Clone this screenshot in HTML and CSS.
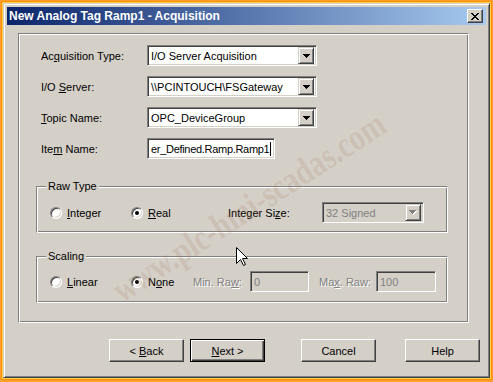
FILE: index.html
```html
<!DOCTYPE html>
<html lang="en">
<head>
  <meta charset="UTF-8">
  <title>New Analog Tag Ramp1 - Acquisition</title>
  <link rel="stylesheet" href="styles.css">
</head>
<body>

  <div class="window">
    <div class="titlebar">
      <span class="title">New Analog Tag Ramp1 - Acquisition</span>
      <div class="close-btn">
        <svg width="8" height="7" viewBox="0 0 8 7"><path d="M0 0h2v1H0zM6 0h2v1H6zM1 1h2v1H1zM5 1h2v1H5zM2 2h4v1H2zM3 3h2v1H3zM2 4h4v1H2zM1 5h2v1H1zM5 5h2v1H5zM0 6h2v1H0zM6 6h2v1H6z" fill="#000"/></svg>
      </div>
    </div>

    <div class="panel">
      <div class="form-grid">
        <span class="label">Ac<u>q</u>uisition Type:</span>
        <div class="combo wide">
          <span class="field-text">I/O Server Acquisition</span>
          <span class="combo-arrow"><svg width="7" height="4" viewBox="0 0 7 4"><path d="M0 0h7v1H0zM1 1h5v1H1zM2 2h3v1H2zM3 3h1v1H3z" fill="#000"/></svg></span>
        </div>

        <span class="label">I/O <u>S</u>erver:</span>
        <div class="combo wide">
          <span class="field-text">\\PCINTOUCH\FSGateway</span>
          <span class="combo-arrow"><svg width="7" height="4" viewBox="0 0 7 4"><path d="M0 0h7v1H0zM1 1h5v1H1zM2 2h3v1H2zM3 3h1v1H3z" fill="#000"/></svg></span>
        </div>

        <span class="label"><u>T</u>opic Name:</span>
        <div class="combo wide">
          <span class="field-text">OPC_DeviceGroup</span>
          <span class="combo-arrow"><svg width="7" height="4" viewBox="0 0 7 4"><path d="M0 0h7v1H0zM1 1h5v1H1zM2 2h3v1H2zM3 3h1v1H3z" fill="#000"/></svg></span>
        </div>

        <span class="label">Ite<u>m</u> Name:</span>
        <div class="textbox item-box">
          <span class="field-text">er_Defined.Ramp.Ramp1</span><span class="caret"></span>
        </div>
      </div>

      <div class="group raw-group">
        <span class="group-title">Raw Type</span>
        <div class="group-row">
          <div class="option opt-first"><span class="radio"></span><span><u>I</u>nteger</span></div>
          <div class="option opt-real"><span class="radio checked"></span><span><u>R</u>eal</span></div>
          <span class="label size-label">Integer Si<u>z</u>e:</span>
          <div class="combo disabled size-combo">
            <span class="field-text">32 Signed</span>
            <span class="combo-arrow"><svg width="8" height="5" viewBox="0 0 8 5"><path d="M1 1h7v1H1zM2 2h5v1H2zM3 3h3v1H3zM4 4h1v1H4z" fill="#fff"/><path d="M0 0h7v1H0zM1 1h5v1H1zM2 2h3v1H2zM3 3h1v1H3z" fill="#808080"/></svg></span>
          </div>
        </div>
      </div>

      <div class="group scale-group">
        <span class="group-title">Scaling</span>
        <div class="group-row">
          <div class="option opt-first"><span class="radio"></span><span><u>L</u>inear</span></div>
          <div class="option opt-none"><span class="radio checked"></span><span>N<u>o</u>ne</span></div>
          <span class="label muted raw-label">Min. Ra<u>w</u>:</span>
          <div class="textbox disabled min-box"><span class="field-text">0</span></div>
          <span class="label muted raw-label max-label">Ma<u>x</u>. Raw:</span>
          <div class="textbox disabled max-box"><span class="field-text">100</span></div>
        </div>
      </div>
    </div>

    <div class="buttons">
      <button class="btn">&lt; <u>B</u>ack</button>
      <button class="btn default"><u>N</u>ext &gt;</button>
      <button class="btn cancel">Cancel</button>
      <button class="btn help">Help</button>
    </div>

    <div class="watermark">www.plc-hmi-scadas.com</div>
    <svg class="cursor" width="12" height="19" viewBox="0 0 12 19"><path d="M0.5 0.5V16.5L4.5 12.5L7.5 18.5L9.5 17.5L6.5 11.5H11.5Z" fill="#fff" stroke="#000" stroke-width="1"/></svg>
  </div>

</body>
</html>
```

FILE: styles.css
```css
body {
  margin: 0;
  padding: 3px;
  background-color: #ff9d2e;
  font-family: "Liberation Sans", Arial, sans-serif;
  font-size: 11px;
  color: #000;
}

.window {
  position: relative;
  width: 487px;
  height: 375px;
  box-sizing: border-box;
  padding: 3px;
  background-color: #d4d0c8;
  border: 1px solid;
  border-color: #d4d0c8 #404040 #404040 #d4d0c8;
  box-shadow: inset 1px 1px #fff, inset -1px -1px #808080, 0 0 0 1px #ffd04a, 0 0 0 2px #ff9000;
  overflow: hidden;
}

.titlebar {
  height: 18px;
  display: flex;
  align-items: center;
  justify-content: space-between;
  padding: 0 3px 0 2px;
  background: linear-gradient(to right, #0a246a, #a6caf0);
}

.title {
  color: #fff;
  font-weight: bold;
  font-size: 12px;
}

.close-btn {
  width: 16px;
  height: 14px;
  box-sizing: border-box;
  display: flex;
  align-items: center;
  justify-content: center;
  background-color: #d4d0c8;
  border: 1px solid;
  border-color: #fff #404040 #404040 #fff;
  box-shadow: inset -1px -1px #808080;
}

.panel {
  width: 451px;
  height: 290px;
  box-sizing: border-box;
  margin: 8px 0 0 11px;
  padding: 11px 0 0 0;
  border: 1px solid;
  border-color: #808080 #fff #fff #808080;
  box-shadow: inset 1px 1px #fff, inset -1px -1px #808080;
}

.form-grid {
  display: grid;
  grid-template-columns: 106px auto;
  grid-auto-rows: 21px;
  row-gap: 10px;
  align-items: center;
  padding-left: 22px;
}

.label u,
.option u,
.btn u {
  text-underline-offset: 1px;
}

.combo,
.textbox {
  height: 21px;
  box-sizing: border-box;
  display: flex;
  align-items: center;
  padding: 2px;
  background-color: #fff;
  border: 1px solid;
  border-color: #808080 #fff #fff #808080;
  box-shadow: inset 1px 1px #404040, inset -1px -1px #d4d0c8;
  overflow: hidden;
}

.combo.wide {
  width: 170px;
}

.field-text {
  flex: 1;
  padding-left: 1px;
  white-space: nowrap;
}

.combo-arrow {
  width: 16px;
  height: 17px;
  box-sizing: border-box;
  display: flex;
  align-items: center;
  justify-content: center;
  background-color: #d4d0c8;
  border: 1px solid;
  border-color: #d4d0c8 #404040 #404040 #d4d0c8;
  box-shadow: inset 1px 1px #fff, inset -1px -1px #808080;
}

.item-box {
  width: 128px;
}

.item-box .field-text {
  flex: none;
  letter-spacing: -0.3px;
}

.caret {
  flex: none;
  width: 1px;
  height: 14px;
  margin-left: 1px;
  background-color: #000;
}

.disabled {
  background-color: #d4d0c8;
  color: #808080;
}

.group {
  position: relative;
  width: 412px;
  height: 47px;
  box-sizing: border-box;
  margin-left: 17px;
  border: 1px solid;
  border-color: #808080 #fff #fff #808080;
  box-shadow: inset 1px 1px #fff, inset -1px -1px #808080;
}

.raw-group {
  margin-top: 27px;
  padding: 15px 0 0 13px;
}

.scale-group {
  margin-top: 23px;
  padding: 14px 0 0 13px;
}

.group-title {
  position: absolute;
  top: -7px;
  left: 9px;
  padding: 0 2px;
  background-color: #d4d0c8;
}

.group-row {
  display: flex;
  align-items: center;
  height: 21px;
}

.option {
  display: flex;
  align-items: center;
  gap: 5px;
}

.opt-first {
  width: 81px;
}

.opt-real {
  width: 97px;
}

.opt-none {
  width: 62px;
}

.radio {
  width: 12px;
  height: 12px;
  box-sizing: border-box;
  display: flex;
  align-items: center;
  justify-content: center;
  border-radius: 50%;
  background-color: #fff;
  border: 1px solid;
  border-color: #808080 #fff #fff #808080;
  box-shadow: inset 1px 1px #404040, inset -1px -1px #d4d0c8;
}

.radio.checked::after {
  content: "";
  width: 4px;
  height: 4px;
  border-radius: 50%;
  background-color: #000;
}

.size-label {
  width: 94px;
}

.size-combo {
  width: 102px;
}

.muted {
  color: #808080;
  text-shadow: 1px 1px #fff;
}

.raw-label {
  width: 57px;
}

.max-label {
  margin-left: 10px;
}

.min-box {
  width: 59px;
}

.max-box {
  width: 60px;
}

.buttons {
  display: flex;
  margin-top: 16px;
  padding-left: 102px;
}

.btn {
  width: 75px;
  height: 23px;
  box-sizing: border-box;
  padding: 0;
  margin-right: 6px;
  font-family: "Liberation Sans", Arial, sans-serif;
  font-size: 11px;
  color: #000;
  background-color: #d4d0c8;
  border: 1px solid;
  border-color: #fff #404040 #404040 #fff;
  box-shadow: inset -1px -1px #808080;
}

.btn.default {
  border-color: #000;
  box-shadow: inset 1px 1px #fff, inset -1px -1px #404040, inset -2px -2px #808080;
  margin-right: 36px;
}

.btn.cancel {
  margin-right: 29px;
}

.watermark {
  position: absolute;
  left: 245px;
  top: 203px;
  transform: translate(-50%, -50%) rotate(-33deg) scale(0.95, 1.2);
  white-space: nowrap;
  font-family: "Liberation Serif", serif;
  font-weight: bold;
  font-size: 31px;
  color: rgba(165, 110, 75, 0.17);
  pointer-events: none;
}

.cursor {
  position: absolute;
  left: 232px;
  top: 243px;
}
```
